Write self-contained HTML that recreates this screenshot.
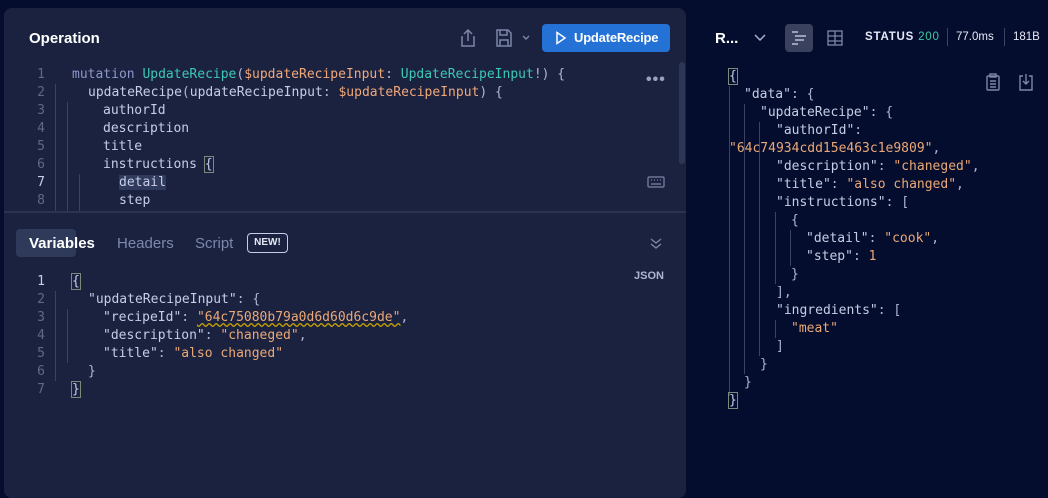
<!DOCTYPE html>
<html><head><style>
*{margin:0;padding:0;box-sizing:border-box}
html,body{width:1048px;height:486px}
body{background:#050d2e;position:relative;overflow:hidden;font-family:"Liberation Sans",sans-serif}
.panel{position:absolute;left:4px;top:8px;width:682px;height:490px;background:#1b2240;border-radius:8px}
.mono{font-family:"DejaVu Sans Mono","Liberation Mono",monospace;font-size:13px}
.ln{position:absolute;height:18px;line-height:18px;white-space:pre;color:#c6cde6}
.num{position:absolute;width:20px;text-align:right;color:#5f6889;line-height:18px;height:18px}
.k{color:#8d97c5}.t{color:#3cc8b4}.v{color:#f0a878}.s{color:#eaa876}.p{color:#aeb6d4}
.guide{position:absolute;width:1px;background:#3a4366}
.br{outline:1px solid #7a8a7a}
</style></head><body>
<div class="panel"></div>
<div style="position:absolute;left:29px;top:30px;color:#fff;font-weight:bold;font-size:15px">Operation</div>
<svg style="position:absolute;left:459px;top:28px" width="18" height="20" viewBox="0 0 18 20" fill="none" stroke="#7d86a8" stroke-width="1.5"><path d="M9 2v11M5 6l4-4 4 4M4 9H3v9h12V9h-1"/></svg>
<svg style="position:absolute;left:495px;top:28px" width="18" height="20" viewBox="0 0 18 20" fill="none" stroke="#7d86a8" stroke-width="1.5"><path d="M2 2h11l3 3v13H2zM5 2v5h7V2M5 18v-6h8v6"/></svg>
<svg style="position:absolute;left:521px;top:34px" width="10" height="8" viewBox="0 0 10 8" fill="none" stroke="#7d86a8" stroke-width="1.4"><path d="M2 2l3 3 3-3"/></svg>
<div style="position:absolute;left:542px;top:24px;width:128px;height:28px;background:#2472d6;border-radius:4px;color:#fff;font-weight:bold;font-size:13px;line-height:28px;padding-left:32px;letter-spacing:-0.2px">UpdateRecipe</div>
<svg style="position:absolute;left:555px;top:31px" width="12" height="14" viewBox="0 0 12 14" fill="none" stroke="#fff" stroke-width="1.5"><path d="M2 1.5l8 5.5-8 5.5z"/></svg>
<div style="position:absolute;left:679px;top:62px;width:6px;height:102px;background:#2e3655;border-radius:3px"></div>
<div style="position:absolute;left:646px;top:71px;color:#9aa2c0;font-size:16px;letter-spacing:1px;font-weight:bold">•••</div>
<svg style="position:absolute;left:647px;top:176px" width="18" height="12" viewBox="0 0 18 12" fill="none" stroke="#7d86a8" stroke-width="1.2"><rect x="1" y="1" width="16" height="10" rx="1"/><path d="M4 4h1M7 4h1M10 4h1M13 4h1M4 8h10"/></svg>
<div class="mono">
<div class="num" style="left:25px;top:66px">1</div><div class="num" style="left:25px;top:84px">2</div><div class="num" style="left:25px;top:102px">3</div><div class="num" style="left:25px;top:120px">4</div><div class="num" style="left:25px;top:138px">5</div><div class="num" style="left:25px;top:156px">6</div><div class="num" style="left:25px;top:174px;color:#c6cde6">7</div><div class="num" style="left:25px;top:192px">8</div>
<div class="guide" style="left:55px;top:84px;height:128px"></div>
<div class="guide" style="left:67px;top:102px;height:110px"></div>
<div class="guide" style="left:79px;top:174px;height:38px"></div>
<div class="ln" style="left:72px;top:66px"><span class="k">mutation</span> <span class="t">UpdateRecipe</span><span class="p">(</span><span class="v">$updateRecipeInput</span><span class="p">:</span> <span class="t">UpdateRecipeInput</span><span class="p">!) {</span></div>
<div class="ln" style="left:88px;top:84px">updateRecipe<span class="p">(</span>updateRecipeInput<span class="p">:</span> <span class="v">$updateRecipeInput</span><span class="p">) {</span></div>
<div class="ln" style="left:103px;top:102px">authorId</div>
<div class="ln" style="left:103px;top:120px">description</div>
<div class="ln" style="left:103px;top:138px">title</div>
<div class="ln" style="left:103px;top:156px">instructions <span class="br">{</span></div>
<div class="ln" style="left:119px;top:174px"><span style="background:#2f3a5c">detail</span></div>
<div class="ln" style="left:119px;top:192px">step</div>
</div>
<div style="position:absolute;left:4px;top:211px;width:682px;height:2px;background:#2b3352"></div>
<div style="position:absolute;left:16px;top:229px;width:60px;height:28px;background:#2f3a5a;border-radius:4px"></div>
<div style="position:absolute;left:29px;top:235px;color:#fff;font-weight:bold;font-size:15px">Variables</div>
<div style="position:absolute;left:117px;top:235px;color:#7d88ad;font-size:15px">Headers</div>
<div style="position:absolute;left:195px;top:235px;color:#7d88ad;font-size:15px">Script</div>
<div style="position:absolute;left:247px;top:233px;width:41px;height:20px;border:1.5px solid #c6cde6;border-radius:4px;color:#e6e9f5;font-size:10px;font-weight:bold;text-align:center;line-height:17px">NEW!</div>
<svg style="position:absolute;left:649px;top:236px" width="14" height="14" viewBox="0 0 14 14" fill="none" stroke="#7d86a8" stroke-width="1.3"><path d="M2 3l5 4 5-4M2 8l5 4 5-4"/></svg>
<div style="position:absolute;left:634px;top:270px;color:#aeb6d4;font-size:11px;font-weight:bold">JSON</div>
<div class="mono">
<div class="num" style="left:25px;top:273px;color:#c6cde6">1</div><div class="num" style="left:25px;top:291px">2</div><div class="num" style="left:25px;top:309px">3</div><div class="num" style="left:25px;top:327px">4</div><div class="num" style="left:25px;top:345px">5</div><div class="num" style="left:25px;top:363px">6</div><div class="num" style="left:25px;top:381px">7</div>
<div class="guide" style="left:55px;top:291px;height:90px"></div>
<div class="guide" style="left:67px;top:309px;height:54px"></div>
<div class="ln" style="left:72px;top:273px"><span class="br">{</span></div>
<div class="ln" style="left:88px;top:291px">"updateRecipeInput"<span class="p">: {</span></div>
<div class="ln" style="left:103px;top:309px">"recipeId"<span class="p">:</span> <span class="s" style="text-decoration:underline wavy #c9a400">"64c75080b79a0d6d60d6c9de"</span><span class="p">,</span></div>
<div class="ln" style="left:103px;top:327px">"description"<span class="p">:</span> <span class="s">"chaneged"</span><span class="p">,</span></div>
<div class="ln" style="left:103px;top:345px">"title"<span class="p">:</span> <span class="s">"also changed"</span></div>
<div class="ln" style="left:88px;top:363px"><span class="p">}</span></div>
<div class="ln" style="left:72px;top:381px"><span class="br">}</span></div>
</div>
<div style="position:absolute;left:715px;top:30px;color:#fff;font-weight:bold;font-size:15px">R...</div>
<svg style="position:absolute;left:753px;top:33px" width="14" height="10" viewBox="0 0 14 10" fill="none" stroke="#aeb6d4" stroke-width="1.4"><path d="M2 2l5 5 5-5"/></svg>
<div style="position:absolute;left:785px;top:24px;width:28px;height:28px;background:#3a415f;border-radius:4px"></div>
<svg style="position:absolute;left:791px;top:30px" width="16" height="16" viewBox="0 0 16 16" fill="none" stroke="#d4d9ee" stroke-width="1.3"><path d="M1 2h6M4 6h11M4 10h9M1 14h6"/></svg>
<svg style="position:absolute;left:826px;top:29px" width="18" height="18" viewBox="0 0 18 18" fill="none" stroke="#7d86a8" stroke-width="1.3"><rect x="2" y="2" width="14" height="14"/><path d="M2 7h14M2 12h14M9 2v14"/></svg>
<div style="position:absolute;left:865px;top:31px;font-size:11.5px;color:#e6e9f5;font-weight:bold;letter-spacing:.8px">STATUS <span style="color:#3cc8a0;font-weight:normal">200</span></div>
<div style="position:absolute;left:947px;top:28px;width:1px;height:18px;background:#3a4366"></div>
<div style="position:absolute;left:956px;top:31px;font-size:11.5px;color:#e6e9f5">77.0ms</div>
<div style="position:absolute;left:1004px;top:28px;width:1px;height:18px;background:#3a4366"></div>
<div style="position:absolute;left:1013px;top:31px;font-size:11.5px;color:#e6e9f5">181B</div>
<svg style="position:absolute;left:986px;top:73px" width="14" height="18" viewBox="0 0 14 18" fill="none" stroke="#7d86a8" stroke-width="1.4"><rect x="1" y="3" width="12" height="14" rx="1"/><rect x="4" y="1" width="6" height="3"/><path d="M4 8h6M4 11h6M4 14h6"/></svg>
<svg style="position:absolute;left:1018px;top:73px" width="16" height="18" viewBox="0 0 16 18" fill="none" stroke="#7d86a8" stroke-width="1.4"><path d="M5 3H2v14h12V3h-3M8 1v10M5 8l3 3 3-3"/></svg>
<div class="mono">
<div class="guide" style="left:729px;top:86px;height:310px"></div>
<div class="guide" style="left:744px;top:104px;height:270px"></div>
<div class="guide" style="left:759px;top:122px;height:234px"></div>
<div class="guide" style="left:775px;top:212px;height:72px"></div>
<div class="guide" style="left:790px;top:230px;height:36px"></div>
<div class="guide" style="left:775px;top:320px;height:18px"></div>
<div class="ln" style="left:729px;top:68px"><span class="br">{</span></div>
<div class="ln" style="left:744px;top:86px">"data"<span class="p">: {</span></div>
<div class="ln" style="left:760px;top:104px">"updateRecipe"<span class="p">: {</span></div>
<div class="ln" style="left:776px;top:122px">"authorId"<span class="p">:</span></div>
<div class="ln" style="left:729px;top:140px"><span class="s">"64c74934cdd15e463c1e9809"</span><span class="p">,</span></div>
<div class="ln" style="left:776px;top:158px">"description"<span class="p">:</span> <span class="s">"chaneged"</span><span class="p">,</span></div>
<div class="ln" style="left:776px;top:176px">"title"<span class="p">:</span> <span class="s">"also changed"</span><span class="p">,</span></div>
<div class="ln" style="left:776px;top:194px">"instructions"<span class="p">: [</span></div>
<div class="ln" style="left:791px;top:212px"><span class="p">{</span></div>
<div class="ln" style="left:806px;top:230px">"detail"<span class="p">:</span> <span class="s">"cook"</span><span class="p">,</span></div>
<div class="ln" style="left:806px;top:248px">"step"<span class="p">:</span> <span class="s">1</span></div>
<div class="ln" style="left:791px;top:266px"><span class="p">}</span></div>
<div class="ln" style="left:776px;top:284px"><span class="p">],</span></div>
<div class="ln" style="left:776px;top:302px">"ingredients"<span class="p">: [</span></div>
<div class="ln" style="left:791px;top:320px"><span class="s">"meat"</span></div>
<div class="ln" style="left:776px;top:338px"><span class="p">]</span></div>
<div class="ln" style="left:760px;top:356px"><span class="p">}</span></div>
<div class="ln" style="left:744px;top:374px"><span class="p">}</span></div>
<div class="ln" style="left:729px;top:392px"><span class="br">}</span></div>
</div>
</body></html>
